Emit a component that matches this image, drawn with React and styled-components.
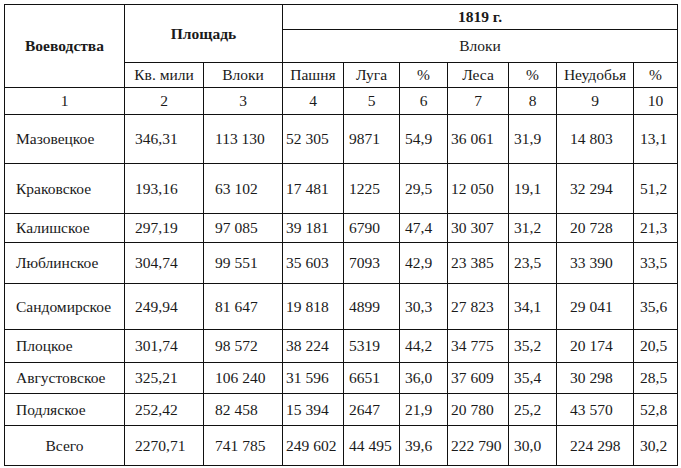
import React from "react";
import styled, { createGlobalStyle } from "styled-components";

const GlobalStyle = createGlobalStyle`
  html, body {
    margin: 0;
    padding: 0;
    background: #fff;
  }
  body {
    padding: 4px 0 0 4px;
    font-family: "Times New Roman", serif;
    color: #1a1a1a;
  }
`;

const colWidths = [120, 79, 79, 61, 56, 48, 61, 48, 77, 44];
const rowHeights = [25, 33, 25, 27, 49, 50, 29, 41, 46, 33, 31, 32, 40];
const colPads = [11, 10, 11, 3, 5, 5, 3, 5, 13, 6];

const Grid = styled.div`
  display: grid;
  grid-template-columns: ${colWidths.map((w) => `${w}px`).join(" ")};
  grid-template-rows: ${rowHeights.map((h) => `${h}px`).join(" ")};
  width: max-content;
  border-top: 1px solid #111;
  border-left: 1px solid #111;
  font-family: "Times New Roman", serif;
  font-size: 15.5px;
  line-height: 1.15;
  color: #1a1a1a;
`;

const Cell = styled.div`
  box-sizing: border-box;
  display: flex;
  align-items: center;
  justify-content: ${(p) => (p.$center ? "center" : "flex-start")};
  padding-left: ${(p) => (p.$center ? 0 : p.$pad || 0)}px;
  border-right: 1px solid #111;
  border-bottom: 1px solid #111;
  grid-column: span ${(p) => p.$cols || 1};
  grid-row: span ${(p) => p.$rows || 1};
  font-family: "Times New Roman", serif;
  font-weight: ${(p) => (p.$bold ? 700 : 400)};
  white-space: nowrap;
`;

const subHeads = ["Кв. мили", "Влоки", "Пашня", "Луга", "%", "Леса", "%", "Неудобья", "%"];

const rows = [
  ["Мазовецкое", "346,31", "113 130", "52 305", "9871", "54,9", "36 061", "31,9", "14 803", "13,1"],
  ["Краковское", "193,16", "63 102", "17 481", "1225", "29,5", "12 050", "19,1", "32 294", "51,2"],
  ["Калишское", "297,19", "97 085", "39 181", "6790", "47,4", "30 307", "31,2", "20 728", "21,3"],
  ["Люблинское", "304,74", "99 551", "35 603", "7093", "42,9", "23 385", "23,5", "33 390", "33,5"],
  ["Сандомирское", "249,94", "81 647", "19 818", "4899", "30,3", "27 823", "34,1", "29 041", "35,6"],
  ["Плоцкое", "301,74", "98 572", "38 224", "5319", "44,2", "34 775", "35,2", "20 174", "20,5"],
  ["Августовское", "325,21", "106 240", "31 596", "6651", "36,0", "37 609", "35,4", "30 298", "28,5"],
  ["Подляское", "252,42", "82 458", "15 394", "2647", "21,9", "20 780", "25,2", "43 570", "52,8"],
  ["Всего", "2270,71", "741 785", "249 602", "44 495", "39,6", "222 790", "30,0", "224 298", "30,2"],
];

export default function App() {
  return (
    <>
      <GlobalStyle />
      <Grid>
        <Cell $center $bold $rows={3}>Воеводства</Cell>
        <Cell $center $bold $rows={2} $cols={2}>Площадь</Cell>
        <Cell $center $bold $cols={7}>1819 г.</Cell>
        <Cell $center $cols={7}>Влоки</Cell>
        {subHeads.map((s, i) => (
          <Cell key={"s" + i} $center>{s}</Cell>
        ))}
        {colWidths.map((_, i) => (
          <Cell key={"n" + i} $center>{i + 1}</Cell>
        ))}
        {rows.map((r, ri) =>
          r.map((c, ci) => (
            <Cell
              key={ri + "-" + ci}
              $center={ri === rows.length - 1 && ci === 0}
              $pad={colPads[ci]}
            >
              {c}
            </Cell>
          ))
        )}
      </Grid>
    </>
  );
}
